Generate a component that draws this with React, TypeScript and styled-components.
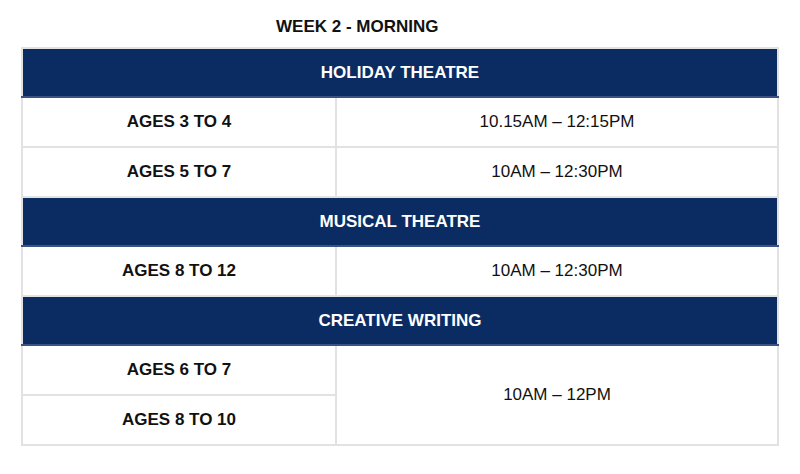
import React from 'react';
import styled, { createGlobalStyle } from 'styled-components';

const GlobalStyle = createGlobalStyle`
  body {
    margin: 0;
    background: #ffffff;
    font-family: 'Liberation Sans', Arial, sans-serif;
  }
`;

const Page = styled.div`
  width: 800px;
  height: 474px;
  padding: 17px 21px 0 21px;
  box-sizing: border-box;
`;

const Title = styled.h1`
  margin: 0 0 10px 255px;
  font-size: 17px;
  line-height: 20px;
  font-weight: 700;
  color: #111111;
`;

const Table = styled.table`
  width: 758px;
  border-collapse: collapse;
  table-layout: fixed;
  border: 2px solid #e2e2e2;
`;

const HeadCell = styled.th`
  height: 47px;
  padding: 0;
  background: #0b2c62;
  color: #ffffff;
  font-size: 17px;
  font-weight: 700;
  text-align: center;
  border: 1px solid #c9d0dc;
  border-bottom: 2px solid #3a5384;
`;

const AgeCell = styled.td`
  height: 48px;
  padding: 0;
  text-align: center;
  font-size: 17px;
  font-weight: 700;
  color: #111111;
  border: 2px solid #e2e2e2;
`;

const TimeCell = styled.td`
  padding: 0;
  text-align: center;
  font-size: 17px;
  color: #111111;
  border: 2px solid #e2e2e2;
`;

type Slot = { ages: string[]; time: string };
type Section = { name: string; slots: Slot[] };

const sections: Section[] = [
  {
    name: 'HOLIDAY THEATRE',
    slots: [
      { ages: ['AGES 3 TO 4'], time: '10.15AM – 12:15PM' },
      { ages: ['AGES 5 TO 7'], time: '10AM – 12:30PM' },
    ],
  },
  {
    name: 'MUSICAL THEATRE',
    slots: [{ ages: ['AGES 8 TO 12'], time: '10AM – 12:30PM' }],
  },
  {
    name: 'CREATIVE WRITING',
    slots: [{ ages: ['AGES 6 TO 7', 'AGES 8 TO 10'], time: '10AM – 12PM' }],
  },
];

const App = () => {
  return (
    <Page>
      <GlobalStyle />
      <Title>WEEK 2 - MORNING</Title>
      <Table>
        <colgroup>
          <col style={{ width: 314 }} />
          <col />
        </colgroup>
        <tbody>
          {sections.map((section) => (
            <React.Fragment key={section.name}>
              <tr>
                <HeadCell colSpan={2}>{section.name}</HeadCell>
              </tr>
              {section.slots.map((slot) =>
                slot.ages.map((age, i) => (
                  <tr key={age}>
                    <AgeCell>{age}</AgeCell>
                    {i === 0 && <TimeCell rowSpan={slot.ages.length}>{slot.time}</TimeCell>}
                  </tr>
                ))
              )}
            </React.Fragment>
          ))}
        </tbody>
      </Table>
    </Page>
  );
};

export default App;
